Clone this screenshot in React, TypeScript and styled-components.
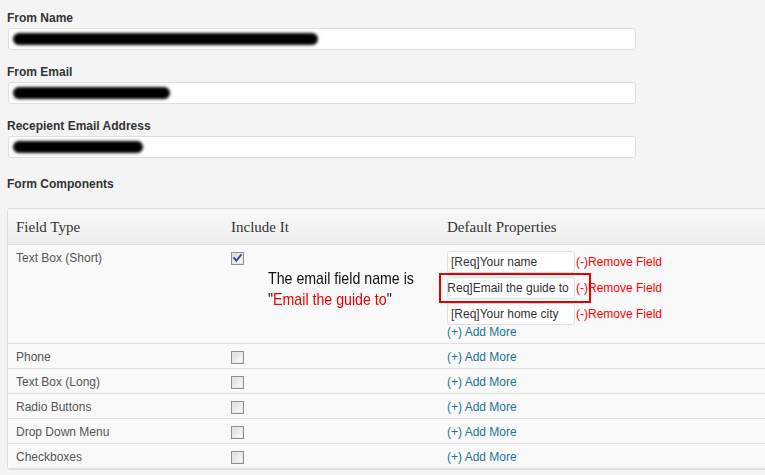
import React from "react";
import styled, { createGlobalStyle } from "styled-components";

const GlobalStyle = createGlobalStyle`
  html, body {
    margin: 0;
    padding: 0;
    background: #f4f4f4;
    overflow: hidden;
  }
  body {
    font-family: "Liberation Sans", Arial, sans-serif;
    font-size: 12px;
    color: #333;
  }
`;

const Page = styled.div`
  width: 830px;
  display: flex;
  flex-direction: column;
  align-items: flex-start;
  padding: 11px 0 40px 7px;
`;

const FieldGroup = styled.div`
  display: flex;
  flex-direction: column;
  gap: 2px;
  margin-bottom: 15px;
`;

const Label = styled.div`
  font: bold 12px/15px "Liberation Sans", Arial, sans-serif;
  color: #333;
`;

const SectionTitle = styled(Label)`
  margin-top: 4px;
`;

const TextInput = styled.div`
  margin-left: 1px;
  width: 628px;
  height: 22px;
  box-sizing: border-box;
  border: 1px solid #dfdfdf;
  border-radius: 3px;
  background: #fff;
  display: flex;
  align-items: center;
  padding-left: 4px;
`;

const Redaction = styled.span<{ $w: number }>`
  display: block;
  width: ${(p) => p.$w}px;
  height: 12px;
  background: #000;
  border-radius: 6px;
  filter: blur(1.4px);
`;

const Table = styled.div`
  margin-top: 16px;
  width: 830px;
  border: 1px solid #dfdfdf;
  border-radius: 3px;
  background: #f9f9f9;
  overflow: hidden;
`;

const HeadRow = styled.div`
  display: grid;
  grid-template-columns: 215px 216px 1fr;
  height: 35px;
  align-items: center;
  background: linear-gradient(#fafafa, #ececec);
  border-bottom: 1px solid #dfdfdf;
`;

const HeadCell = styled.div`
  padding-left: 8px;
  font: 15px/18px "Liberation Serif", "Times New Roman", serif;
  color: #333;
`;

const Row = styled.div`
  position: relative;
  display: grid;
  grid-template-columns: 215px 216px 1fr;
  padding: 6px 0 3px;
  border-bottom: 1px solid #dfdfdf;
  background: #f9f9f9;
`;

const Cell = styled.div`
  padding-left: 8px;
  font: 12px/15px "Liberation Sans", Arial, sans-serif;
  color: #555;
`;

const PropsCell = styled(Cell)`
  display: flex;
  flex-direction: column;
  align-items: flex-start;
`;

const PropList = styled.div`
  display: flex;
  flex-direction: column;
  gap: 4px;
`;

const PropLine = styled.div`
  display: flex;
  align-items: center;
  gap: 1px;
`;

const PropInput = styled.div`
  width: 128px;
  height: 22px;
  box-sizing: border-box;
  border: 1px solid #dfdfdf;
  border-radius: 3px;
  background: #fff;
  padding: 0 3px;
  display: flex;
  align-items: center;
  overflow: hidden;
  white-space: nowrap;
  font: 12px/15px "Liberation Sans", Arial, sans-serif;
  color: #333;
`;

const PropText = styled.span<{ $shift?: number }>`
  flex-shrink: 0;
  margin-left: ${(p) => -(p.$shift ?? 0)}px;
`;

const RemoveLink = styled.span`
  color: #f00;
  font: 12px/15px "Liberation Sans", Arial, sans-serif;
`;

const AddMore = styled.span`
  color: #21759b;
  font: 12px/15px "Liberation Sans", Arial, sans-serif;
`;

const CheckBox = styled.span`
  display: block;
  width: 13px;
  height: 13px;
  margin-top: 1px;
  box-sizing: border-box;
  border: 1px solid #8e8f8f;
  background: linear-gradient(135deg, #d8d8d8 0%, #f0f0f0 60%, #fdfdfd 100%);
  box-shadow: inset 0 0 0 1px #e6e6e6;
  position: relative;
  svg {
    position: absolute;
    left: 0;
    top: 0;
  }
`;

const Note = styled.div`
  position: absolute;
  left: 260px;
  top: 23px;
  font: 17px/21px "Liberation Sans", Arial, sans-serif;
  color: #111;
  transform: scaleX(0.835);
  transform-origin: left top;
  white-space: nowrap;
  pointer-events: none;
`;

const NoteRed = styled.span`
  color: #e60000;
`;

const Highlight = styled.div`
  position: absolute;
  left: 431px;
  top: 28px;
  width: 152px;
  height: 30px;
  box-sizing: border-box;
  border: 2px solid #e20000;
  pointer-events: none;
`;

const Check = ({ checked }: { checked?: boolean }) => (
  <CheckBox>
    {checked && (
      <svg width="11" height="11" viewBox="0 0 11 11">
        <path
          d="M2.2 5.2 L4.4 7.8 L8.8 2.2"
          fill="none"
          stroke="#2a4a9c"
          strokeWidth="1.9"
          strokeLinecap="square"
        />
      </svg>
    )}
  </CheckBox>
);

const simpleRows = ["Phone", "Text Box (Long)", "Radio Buttons", "Drop Down Menu", "Checkboxes"];

const props = [
  { text: "[Req]Your name", shift: 0 },
  { text: "[Req]Email the guide to", shift: 7 },
  { text: "[Req]Your home city", shift: 0 },
];

export default function App() {
  return (
    <>
      <GlobalStyle />
      <Page>
        <FieldGroup>
          <Label>From Name</Label>
          <TextInput>
            <Redaction $w={305} />
          </TextInput>
        </FieldGroup>
        <FieldGroup>
          <Label>From Email</Label>
          <TextInput>
            <Redaction $w={157} />
          </TextInput>
        </FieldGroup>
        <FieldGroup>
          <Label>Recepient Email Address</Label>
          <TextInput>
            <Redaction $w={130} />
          </TextInput>
        </FieldGroup>
        <SectionTitle>Form Components</SectionTitle>
        <Table>
          <HeadRow>
            <HeadCell>Field Type</HeadCell>
            <HeadCell>Include It</HeadCell>
            <HeadCell>Default Properties</HeadCell>
          </HeadRow>
          <Row>
            <Cell>Text Box (Short)</Cell>
            <Cell>
              <Check checked />
            </Cell>
            <PropsCell>
              <PropList>
                {props.map((p) => (
                  <PropLine key={p.text}>
                    <PropInput>
                      <PropText $shift={p.shift}>{p.text}</PropText>
                    </PropInput>
                    <RemoveLink>(-)Remove Field</RemoveLink>
                  </PropLine>
                ))}
              </PropList>
              <AddMore>(+) Add More</AddMore>
            </PropsCell>
            <Note>
              The email field name is
              <br />
              "<NoteRed>Email the guide to</NoteRed>"
            </Note>
            <Highlight />
          </Row>
          {simpleRows.map((name) => (
            <Row key={name}>
              <Cell>{name}</Cell>
              <Cell>
                <Check />
              </Cell>
              <Cell>
                <AddMore>(+) Add More</AddMore>
              </Cell>
            </Row>
          ))}
        </Table>
      </Page>
    </>
  );
}
